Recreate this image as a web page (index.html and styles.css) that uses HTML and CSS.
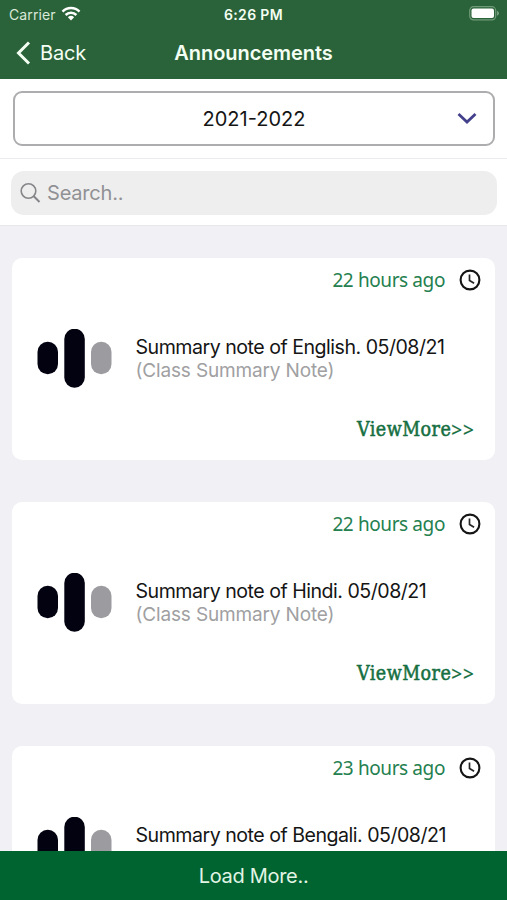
FILE: index.html
```html
<!DOCTYPE html>
<html lang="en">
<head>
<meta charset="utf-8">
<title>Announcements</title>
<link rel="stylesheet" href="styles.css">
</head>
<body>
<svg class="defs" width="0" height="0">
  <symbol id="clock" viewBox="0 0 22 22"><circle cx="11" cy="11" r="9.4" fill="none" stroke="#151515" stroke-width="2.1"/><path d="M10.5 5.6v5.8l4.6 2.8" fill="none" stroke="#252525" stroke-width="1.7"/></symbol>
  <symbol id="bars" viewBox="0 0 76 60"><rect x="0.5" y="12.8" width="20.5" height="32.5" rx="10.2" fill="#030211"/><rect x="27.3" y="-.3" width="20.5" height="59" rx="10.2" fill="#030211"/><rect x="54" y="12.8" width="20.5" height="32.5" rx="10.2" fill="#9c9b9f"/></symbol>
</svg>
<div class="screen">
  <header class="header">
    <div class="status">
      <div class="carrier"><span>Carrier</span>
        <svg width="20" height="15" viewBox="0 0 20 15"><g fill="none" stroke="#fff" stroke-width="2.5"><path d="M1.5 5.6a12 12 0 0 1 17 0"/><path d="M4.6 9a7.7 7.7 0 0 1 10.8 0"/></g><path d="M6.9 11.2a4.5 4.5 0 0 1 6.2 0L10 14.4z" fill="#fff"/></svg>
      </div>
      <span class="time">6:26 PM</span>
      <svg class="battery" width="31" height="15" viewBox="0 0 31 15"><rect x=".7" y=".7" width="26" height="13.2" rx="3.8" fill="none" stroke="#6f9a78" stroke-width="1.2"/><rect x="2.5" y="2.5" width="22.5" height="9.6" rx="2" fill="#fff"/><path d="M28.2 4.8v5a2.8 2.8 0 0 0 0-5z" fill="#8cac92"/></svg>
    </div>
    <div class="nav">
      <div class="back"><svg width="15" height="24" viewBox="0 0 15 24"><path d="M13 1.5 2.5 12 13 22.5" fill="none" stroke="#f4fff3" stroke-width="3"/></svg><span>Back</span></div>
      <h1>Announcements</h1>
      <div></div>
    </div>
  </header>
  <div class="year">
    <div class="select"><span></span><span class="year-text">2021-2022</span>
      <svg width="20" height="13" viewBox="0 0 20 13"><path d="M1.5 2 10 10 18.5 2" fill="none" stroke="#44418c" stroke-width="2.8"/></svg>
    </div>
  </div>
  <div class="search">
    <div class="field">
      <svg width="21" height="21" viewBox="0 0 21 21"><g fill="none" stroke="#86868a" stroke-width="1.6"><circle cx="8.5" cy="8" r="7.3"/><path d="m13.8 13.3 5.7 5.7" stroke-width="2"/></g></svg>
      <span>Search..</span>
    </div>
  </div>
  <main class="list">
    <article class="card">
      <div class="when"><span>22 hours ago</span><svg width="22" height="22"><use href="#clock"/></svg></div>
      <div class="note"><svg width="76" height="60"><use href="#bars"/></svg><div class="copy"><p class="title">Summary note of English. 05/08/21</p><p class="kind">(Class Summary Note)</p></div></div>
      <div class="more"><span class="more-text">ViewMore</span><span class="arrows">&gt;&gt;</span></div>
    </article>
    <article class="card">
      <div class="when"><span>22 hours ago</span><svg width="22" height="22"><use href="#clock"/></svg></div>
      <div class="note"><svg width="76" height="60"><use href="#bars"/></svg><div class="copy"><p class="title">Summary note of Hindi. 05/08/21</p><p class="kind">(Class Summary Note)</p></div></div>
      <div class="more"><span class="more-text">ViewMore</span><span class="arrows">&gt;&gt;</span></div>
    </article>
    <article class="card">
      <div class="when"><span>23 hours ago</span><svg width="22" height="22"><use href="#clock"/></svg></div>
      <div class="note"><svg width="76" height="60"><use href="#bars"/></svg><div class="copy"><p class="title">Summary note of Bengali. 05/08/21</p></div></div>
    </article>
  </main>
  <footer class="load"><span>Load More..</span></footer>
</div>
</body>
</html>
```
FILE: styles.css
```css
* { box-sizing: border-box; }
body { margin: 0; font-family: Inter, sans-serif; color: #151515; }
h1, p { margin: 0; }
.defs { display: block; height: 0; }
.screen { width: 507px; height: 900px; display: flex; flex-direction: column; overflow: hidden; background: #f0f0f5; white-space: nowrap; }
.screen svg { display: block; flex: none; overflow: visible; }
.header { height: 79px; flex: none; background: #2a6339; color: #f4fff3; }
.status { height: 28px; display: grid; grid-template-columns: 1fr auto 1fr; padding: 0 7px 0 9px; align-items: center; }
.carrier { display: flex; gap: 6px; align-items: center; font-size: 14px; letter-spacing: .1px; color: #d9e8d8; }
.carrier svg { margin: -2px 0 0 -1px; }
.time { font-size: 14px; font-weight: 600; letter-spacing: .35px; margin-left: -2px; }
.battery { justify-self: end; margin-top: -2px; }
.nav { height: 51px; display: grid; grid-template-columns: 1fr auto 1fr; align-items: center; padding: 0 16px 2px; }
.back { display: flex; align-items: center; gap: 9px; font-size: 20px; letter-spacing: -.2px; }
.nav h1 { font-size: 20px; line-height: 24px; font-weight: 600; letter-spacing: -.05px; }
.year { height: 80px; flex: none; padding: 12px 12px 0 13px; background: #fff; border-bottom: 1px solid #ebebed; }
.select { height: 55px; border: 2px solid #adadaf; border-radius: 9px; display: grid; grid-template-columns: 1fr auto 1fr; align-items: center; padding: 0 16px; font-size: 20px; }
.select svg { justify-self: end; }
.search { height: 67px; flex: none; padding: 12px 10px 0 11px; background: #fff; border-bottom: 1px solid #e8e8ec; }
.field { height: 44px; border-radius: 13px; background: #eee; display: flex; align-items: center; gap: 6px; padding-left: 9px; color: #919195; font-size: 20px; letter-spacing: -.2px; }
.list { flex: 1; min-height: 0; overflow: hidden; padding: 32px 12px 0; display: flex; flex-direction: column; gap: 42px; }
.card { height: 202px; flex: none; border-radius: 10px; background: #fff; display: flex; flex-direction: column; }
.when { height: 43px; display: flex; align-items: center; justify-content: flex-end; gap: 14px; padding-right: 14px; font-family: "Noto Sans", sans-serif; font-size: 19px; letter-spacing: -.4px; color: #24804f; }
.note { height: 116px; display: flex; align-items: center; gap: 23px; padding: 0 0 0 25px; }
.copy { height: 60px; padding-top: 6px; margin-left: -.5px; }
.title { font-size: 19.6px; line-height: 24px; letter-spacing: -.5px; }
.kind { font-size: 19px; line-height: 23px; letter-spacing: -.15px; color: #a0a0a2; }
.more { display: flex; justify-content: flex-end; align-items: center; height: 26px; padding-right: 20px; font-size: 19px; color: #166f42; }
.more-text { font-family: "DejaVu Serif Condensed", "DejaVu Serif", serif; font-stretch: condensed; font-size: 19.5px; letter-spacing: .45px; margin-top: -1px; -webkit-text-stroke: .5px #166f42; }
.arrows { font-family: "Noto Sans", sans-serif; letter-spacing: 1px; -webkit-text-stroke: .2px #166f42; }
.load { height: 49px; flex: none; background: #006431; color: #e2f5e5; display: flex; align-items: center; justify-content: center; font-size: 20px; letter-spacing: -.3px; }
```
